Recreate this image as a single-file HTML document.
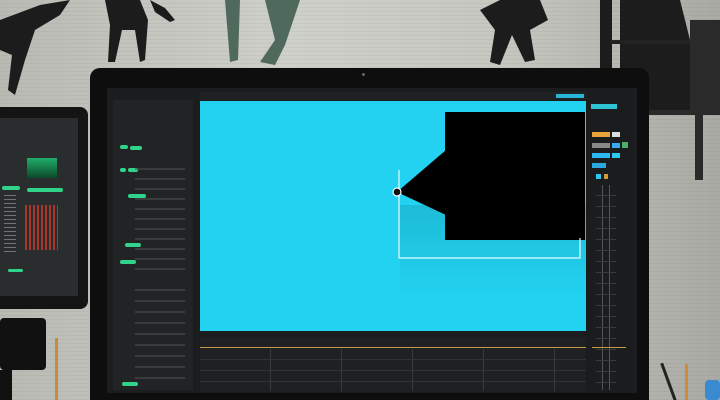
<!DOCTYPE html><html style="overflow:hidden;height:400px"><head><style>
body{margin:0;width:720px;height:400px;overflow:hidden;position:relative;background:repeating-linear-gradient(transparent 0 3px,rgba(0,0,0,.04) 3px 4px),linear-gradient(90deg,#b9bab3,#cfd0ca 40%,#c6c7c0 70%,#a9aaa3);font-family:"Liberation Sans",sans-serif}
div{position:absolute;box-sizing:border-box}
.g{background:#2fd38a;border-radius:2px;height:4px}
</style></head><body>
<svg style="position:absolute;left:0;top:0" width="720" height="110">
<g fill="#1c1c1c">
<path d="M0 20 L40 5 L70 0 L60 15 L35 30 L25 60 L15 95 L8 90 L12 55 L0 50Z"/>
<path d="M105 0 L140 0 L148 20 L145 60 L140 62 L135 30 L122 30 L115 62 L108 62 L110 25Z"/>
<path d="M150 0 L165 8 L175 20 L170 22 L155 12Z"/>
<path d="M480 10 L500 0 L540 0 L548 20 L530 30 L535 60 L525 62 L512 35 L500 65 L490 62 L495 30Z"/>
<path d="M600 0 L612 0 L612 68 L600 68Z"/>
<path d="M620 0 L680 0 L690 40 L700 70 L700 110 L620 110 L620 60Z"/>
</g>
<g fill="#4f6a5c"><path d="M225 0 L240 0 L238 60 L230 62Z"/><path d="M265 0 L300 0 L285 45 L275 65 L260 62 L275 40Z"/></g>
<rect x="610" y="40" width="110" height="4" fill="#222"/>
<rect x="690" y="20" width="30" height="90" fill="#2a2a2a"/>
</svg>
<div style="left:648px;top:110px;width:72px;height:5px;background:#2a2a2a"></div>
<div style="left:695px;top:110px;width:8px;height:70px;background:#2a2a2a"></div>
<div style="left:-10px;top:107px;width:98px;height:202px;background:#141414;border-radius:8px"></div>
<div style="left:0;top:118px;width:78px;height:178px;background:#2a2d2e"></div>
<div style="left:27px;top:158px;width:30px;height:20px;background:linear-gradient(#1fae6a,#0c4a2a)"></div>
<div style="left:2px;top:186px;width:18px;height:4px" class="g"></div><div style="left:27px;top:188px;width:36px;height:4px" class="g"></div>
<div style="left:25px;top:205px;width:33px;height:45px;background:repeating-linear-gradient(90deg,#c8372c 0 2px,transparent 2px 4px);opacity:.8"></div>
<div style="left:4px;top:195px;width:12px;height:60px;background:repeating-linear-gradient(#bbb 0 1px,transparent 1px 4px);opacity:.5"></div>
<div style="left:8px;top:269px;width:15px;height:3px" class="g"></div>
<div style="left:0;top:318px;width:46px;height:52px;background:#111;border-radius:4px"></div>
<div style="left:0;top:370px;width:12px;height:30px;background:#111"></div>
<div style="left:55px;top:338px;width:3px;height:62px;background:#c98a40"></div>
<div style="left:667px;top:362px;width:3px;height:40px;background:#222;transform:rotate(-20deg)"></div>
<div style="left:685px;top:364px;width:3px;height:40px;background:#d08a3a"></div>
<div style="left:705px;top:380px;width:15px;height:20px;background:#3a8ad0;border-radius:4px"></div>
<div style="left:90px;top:68px;width:559px;height:332px;background:#0e0e0f;border-radius:10px 10px 0 0"></div>
<div style="left:362px;top:73px;width:3px;height:3px;background:#666;border-radius:50%"></div>
<div style="left:107px;top:88px;width:530px;height:305px;background:#1b1c1e"></div>
<div style="left:200px;top:92px;width:386px;height:8px;background:#202123"></div>
<div style="left:556px;top:94px;width:28px;height:4px;background:#28b6d8"></div>
<div style="left:113px;top:100px;width:80px;height:290px;background:#222325"></div>
<div style="left:120px;top:145px;width:8px;height:4px" class="g"></div><div style="left:130px;top:146px;width:12px" class="g"></div>
<div style="left:120px;top:168px;width:6px" class="g"></div><div style="left:128px;top:168px;width:10px" class="g"></div>
<div style="left:128px;top:194px;width:18px" class="g"></div>
<div style="left:125px;top:243px;width:16px" class="g"></div>
<div style="left:120px;top:260px;width:16px" class="g"></div>
<div style="left:122px;top:382px;width:16px" class="g"></div>
<div style="left:135px;top:160px;width:50px;height:110px;background:repeating-linear-gradient(transparent 0 8px,#4a4b4e 8px 10px);opacity:.6"></div>
<div style="left:135px;top:280px;width:50px;height:100px;background:repeating-linear-gradient(transparent 0 9px,#4a4b4e 9px 11px);opacity:.6"></div>
<div style="left:200px;top:101px;width:386px;height:230px;background:#22d2f0"></div>
<div style="left:400px;top:205px;width:186px;height:90px;background:linear-gradient(#1ebbd6,#22d2f000)"></div>
<div style="left:445px;top:112px;width:140px;height:128px;background:#000"></div>
<svg style="position:absolute;left:0;top:0" width="720" height="400"><polygon points="397,192 446,150 446,215" fill="#000"/>
<path d="M399 170 V258 H580 V238" stroke="#e6fafd" stroke-width="1.2" fill="none"/>
<circle cx="397" cy="192" r="4" fill="#111" stroke="#fff" stroke-width="1.2"/></svg>
<div style="left:200px;top:338px;width:386px;height:54px;background:#1f2022"></div>
<div style="left:200px;top:347px;width:386px;height:1px;background:#c79a4a"></div>
<div style="left:200px;top:349px;width:386px;height:42px;background:repeating-linear-gradient(transparent 0 10px,#333 10px 11px),repeating-linear-gradient(90deg,transparent 0 70px,#3a3a3a 70px 71px)"></div>
<div style="left:591px;top:104px;width:26px;height:5px;background:#2fc4d4"></div>
<div style="left:592px;top:132px;width:18px;height:5px;background:#e8a43a"></div>
<div style="left:612px;top:132px;width:8px;height:5px;background:#ddd"></div>
<div style="left:592px;top:143px;width:18px;height:5px;background:#888"></div>
<div style="left:612px;top:143px;width:8px;height:5px;background:#3aaaf0"></div>
<div style="left:592px;top:153px;width:18px;height:5px;background:#2cb8f0"></div>
<div style="left:612px;top:153px;width:8px;height:5px;background:#2cc8f0"></div>
<div style="left:592px;top:163px;width:14px;height:5px;background:#2ca8e0"></div>
<div style="left:622px;top:142px;width:6px;height:6px;background:#4caf6a"></div>
<div style="left:596px;top:174px;width:5px;height:5px;background:#2cc8f0"></div>
<div style="left:604px;top:174px;width:4px;height:5px;background:#d09a3a"></div>
<div style="left:596px;top:185px;width:20px;height:205px;background:repeating-linear-gradient(transparent 0 10px,#3a3a3a 10px 11px),repeating-linear-gradient(90deg,transparent 0 6px,#555 6px 7px)"></div>
<div style="left:592px;top:347px;width:34px;height:1px;background:#c79a4a"></div>
</body></html>
